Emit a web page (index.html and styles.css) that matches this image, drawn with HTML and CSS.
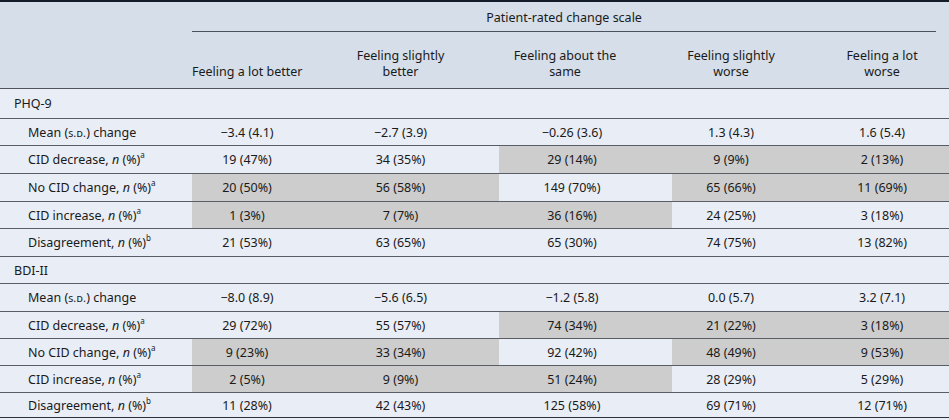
FILE: index.html
```html
<!DOCTYPE html>
<html lang="en">
<head>
<meta charset="utf-8">
<title>Patient-rated change scale</title>
<link rel="stylesheet" href="styles.css">
</head>
<body>
<table class="tbl">
  <colgroup>
    <col class="c-label"><col class="c1"><col class="c2"><col class="c3"><col class="c4"><col class="c5">
  </colgroup>
  <thead>
    <tr class="h1">
      <th></th>
      <th colspan="5" class="span"><div class="span-in">Patient-rated change scale</div></th>
    </tr>
    <tr class="h2">
      <th></th>
      <th class="k1">Feeling a lot better</th>
      <th class="k2">Feeling slightly<br>better</th>
      <th class="k3">Feeling about the<br>same</th>
      <th class="k4">Feeling slightly<br>worse</th>
      <th class="k5">Feeling a lot<br>worse</th>
    </tr>
  </thead>
  <tbody>
    <tr class="sec p30"><td colspan="6">PHQ-9</td></tr>
    <tr class="row p27">
      <td class="lab">Mean (<span class="sc">s.d.</span>) change</td>
      <td class="k1">−3.4 (4.1)</td><td class="k2">−2.7 (3.9)</td><td class="k3">−0.26 (3.6)</td><td class="k4">1.3 (4.3)</td><td class="k5">1.6 (5.4)</td>
    </tr>
    <tr class="row p28">
      <td class="lab">CID decrease, <i>n</i> (%)<sup>a</sup></td>
      <td class="k1">19 (47%)</td><td class="k2">34 (35%)</td><td class="k3 sh">29 (14%)</td><td class="k4 sh">9 (9%)</td><td class="k5 sh">2 (13%)</td>
    </tr>
    <tr class="row p28">
      <td class="lab">No CID change, <i>n</i> (%)<sup>a</sup></td>
      <td class="k1 sh">20 (50%)</td><td class="k2 sh">56 (58%)</td><td class="k3">149 (70%)</td><td class="k4 sh">65 (66%)</td><td class="k5 sh">11 (69%)</td>
    </tr>
    <tr class="row p27">
      <td class="lab">CID increase, <i>n</i> (%)<sup>a</sup></td>
      <td class="k1 sh">1 (3%)</td><td class="k2 sh">7 (7%)</td><td class="k3 sh">36 (16%)</td><td class="k4">24 (25%)</td><td class="k5">3 (18%)</td>
    </tr>
    <tr class="row p28">
      <td class="lab">Disagreement, <i>n</i> (%)<sup>b</sup></td>
      <td class="k1">21 (53%)</td><td class="k2">63 (65%)</td><td class="k3">65 (30%)</td><td class="k4">74 (75%)</td><td class="k5">13 (82%)</td>
    </tr>
    <tr class="sec p27"><td colspan="6">BDI-II</td></tr>
    <tr class="row p28">
      <td class="lab">Mean (<span class="sc">s.d.</span>) change</td>
      <td class="k1">−8.0 (8.9)</td><td class="k2">−5.6 (6.5)</td><td class="k3">−1.2 (5.8)</td><td class="k4">0.0 (5.7)</td><td class="k5">3.2 (7.1)</td>
    </tr>
    <tr class="row p27">
      <td class="lab">CID decrease, <i>n</i> (%)<sup>a</sup></td>
      <td class="k1">29 (72%)</td><td class="k2">55 (57%)</td><td class="k3 sh">74 (34%)</td><td class="k4 sh">21 (22%)</td><td class="k5 sh">3 (18%)</td>
    </tr>
    <tr class="row p27">
      <td class="lab">No CID change, <i>n</i> (%)<sup>a</sup></td>
      <td class="k1 sh">9 (23%)</td><td class="k2 sh">33 (34%)</td><td class="k3">92 (42%)</td><td class="k4 sh">48 (49%)</td><td class="k5 sh">9 (53%)</td>
    </tr>
    <tr class="row p27">
      <td class="lab">CID increase, <i>n</i> (%)<sup>a</sup></td>
      <td class="k1 sh">2 (5%)</td><td class="k2 sh">9 (9%)</td><td class="k3 sh">51 (24%)</td><td class="k4">28 (29%)</td><td class="k5">5 (29%)</td>
    </tr>
    <tr class="row last p25">
      <td class="lab">Disagreement, <i>n</i> (%)<sup>b</sup></td>
      <td class="k1">11 (28%)</td><td class="k2">42 (43%)</td><td class="k3">125 (58%)</td><td class="k4">69 (71%)</td><td class="k5">12 (71%)</td>
    </tr>
  </tbody>
</table>
</body>
</html>
```

FILE: styles.css
```css
html, body {
  margin: 0;
  padding: 0;
  background: #e9edf5;
}
body {
  font-family: "Noto Sans", "Open Sans", sans-serif;
  font-size: 12.5px;
  color: #1a1a1a;
}
.tbl {
  width: 949px;
  border-collapse: collapse;
  table-layout: fixed;
  border-top: 2px solid #141c2a;
}
.c-label { width: 192px; }
.c1 { width: 110px; }
.c2 { width: 197px; }
.c3 { width: 173px; }
.c4 { width: 118px; }
.c5 { width: 159px; }

th, td {
  padding: 0;
  font-weight: normal;
  white-space: nowrap;
}
thead tr { background: #d5dee9; }
.h1 th { height: 30px; vertical-align: top; }
.span-in {
  margin-right: 13px;
  text-align: center;
  line-height: 16px;
  padding-top: 8px;
  padding-bottom: 5px;
  border-bottom: 1px solid #4a5260;
}
.h2 th {
  height: 48px;
  vertical-align: bottom;
  text-align: center;
  line-height: 16px;
  padding-bottom: 8px;
  border-bottom: 1px solid #4e545c;
}
.k1, .k2, .k4 { text-align: center; }
td.k3 { text-align: center; padding-right: 27px; }
th.k3 { padding-right: 41px; }
.k5 { text-align: center; padding-left: 25px; }

.sec td { padding-left: 14px; }
.sec td, .row td { border-bottom: 1px solid #595e66; }
.p30 td { height: 29px; }
.p28 td { height: 27px; }
.p27 td { height: 26px; }
.p25 td { height: 24px; }
.row td.lab { padding-left: 28px; }
.row.last td { border-bottom: 1px solid #2c3038; }
.sh { background: #cdcdcd; }

.sc {
  font-variant: small-caps;
  font-size: 11px;
  letter-spacing: 0.2px;
}
sup {
  font-size: 8px;
  vertical-align: 6px;
  line-height: 0;
}
i { font-style: italic; }
```
